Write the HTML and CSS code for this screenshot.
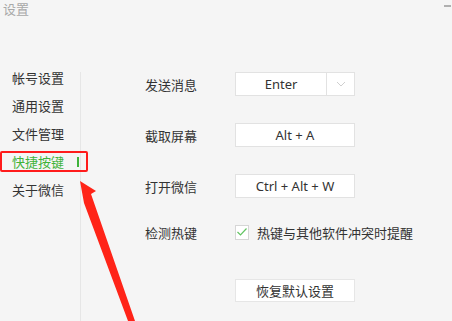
FILE: index.html
```html
<!DOCTYPE html>
<html lang="zh-CN">
<head>
  <meta charset="UTF-8" />
  <title>设置</title>
  <link rel="stylesheet" href="styles.css">
</head>
<body>
  <div class="titlebar">
    <span class="title">设置</span>
    <span class="minimize"></span>
  </div>

  <div class="main">
    <ul class="nav">
      <li>帐号设置</li>
      <li>通用设置</li>
      <li>文件管理</li>
      <li class="active">快捷按键<span class="bar"></span></li>
      <li>关于微信</li>
    </ul>

    <div class="content">
      <div class="row">
        <span class="label">发送消息</span>
        <div class="keybox select">
          <span class="value">Enter</span>
          <span class="caret">
            <svg width="10" height="6" viewBox="0 0 10 6"><path d="M1 1 L5 5 L9 1" fill="none" stroke="#cfcfcf" stroke-width="1"/></svg>
          </span>
        </div>
      </div>
      <div class="row">
        <span class="label">截取屏幕</span>
        <div class="keybox"><span class="value">Alt + A</span></div>
      </div>
      <div class="row">
        <span class="label">打开微信</span>
        <div class="keybox"><span class="value">Ctrl + Alt + W</span></div>
      </div>
      <div class="row check-row">
        <span class="label">检测热键</span>
        <label class="check">
          <span class="box">
            <svg width="12" height="10" viewBox="0 0 12 10"><path d="M1.5 5 L4.5 8 L10.5 1.5" fill="none" stroke="#62c462" stroke-width="1.2"/></svg>
          </span>
          热键与其他软件冲突时提醒
        </label>
      </div>
      <div class="row reset-row">
        <span class="label"></span>
        <button class="reset">恢复默认设置</button>
      </div>
    </div>
  </div>

  <!-- annotation drawn over the screenshot -->
  <div class="highlight"></div>
  <svg class="arrow" width="452" height="321" viewBox="0 0 452 321">
    <polygon points="80,181 96,191 91,194 135,321 128,321 84,203" fill="#ff2418"/>
  </svg>
</body>
</html>
```

FILE: styles.css
```css
* {
  box-sizing: border-box;
}
html, body {
  margin: 0;
  height: 100%;
}
body {
  background: #f5f5f5;
  font-family: "Noto Sans", "Noto Sans CJK SC", sans-serif;
  font-size: 13px;
  color: #333;
  position: relative;
  overflow: hidden;
}
.titlebar {
  height: 72px;
  display: flex;
  justify-content: space-between;
  align-items: flex-start;
  padding: 1px 1px 0 3px;
}
.title {
  color: #a8a8a8;
  line-height: 16px;
}
.minimize {
  width: 7px;
  height: 2px;
  margin-top: 4px;
  background: #b0b0b0;
}
.main {
  display: flex;
  height: 249px;
}
.nav {
  list-style: none;
  margin: 0;
  padding: 0;
  width: 81px;
  border-right: 1px solid #e6e6e6;
  display: flex;
  flex-direction: column;
  gap: 16px;
}
.nav li {
  line-height: 12px;
  height: 12px;
  padding-left: 12px;
  display: flex;
  justify-content: space-between;
  align-items: center;
}
.nav li.active {
  color: #3fb33b;
}
.nav .bar {
  width: 2px;
  height: 10px;
  background: #3fb33b;
  margin-right: 1px;
}
.content {
  padding-left: 64px;
  display: flex;
  flex-direction: column;
  gap: 27px;
}
.row {
  display: flex;
  align-items: center;
  height: 24px;
}
.label {
  width: 90px;
  flex: none;
}
.keybox {
  width: 120px;
  height: 24px;
  background: #fff;
  border: 1px solid #e2e2e2;
  display: flex;
}
.keybox .value {
  flex: 1;
  text-align: center;
  line-height: 22px;
}
.keybox .caret {
  width: 28px;
  border-left: 1px solid #e2e2e2;
  display: flex;
  align-items: center;
  justify-content: center;
}
.check-row {
  height: 14px;
}
.check {
  display: flex;
  align-items: center;
  gap: 8px;
}
.check .box {
  width: 14px;
  height: 15px;
  background: #fff;
  border: 1px solid #d6d6d6;
  display: flex;
  align-items: center;
  justify-content: center;
}
.reset-row {
  margin-top: 13px;
  height: 23px;
}
.reset {
  width: 120px;
  height: 23px;
  background: #fff;
  border: 1px solid #e6e6e6;
  font: inherit;
  color: #333;
  padding: 0;
}
.highlight {
  position: absolute;
  left: 0;
  top: 151px;
  width: 88px;
  height: 21px;
  border: 2px solid #ff1c1c;
  border-radius: 2px;
}
.arrow {
  position: absolute;
  left: 0;
  top: 0;
}
```
